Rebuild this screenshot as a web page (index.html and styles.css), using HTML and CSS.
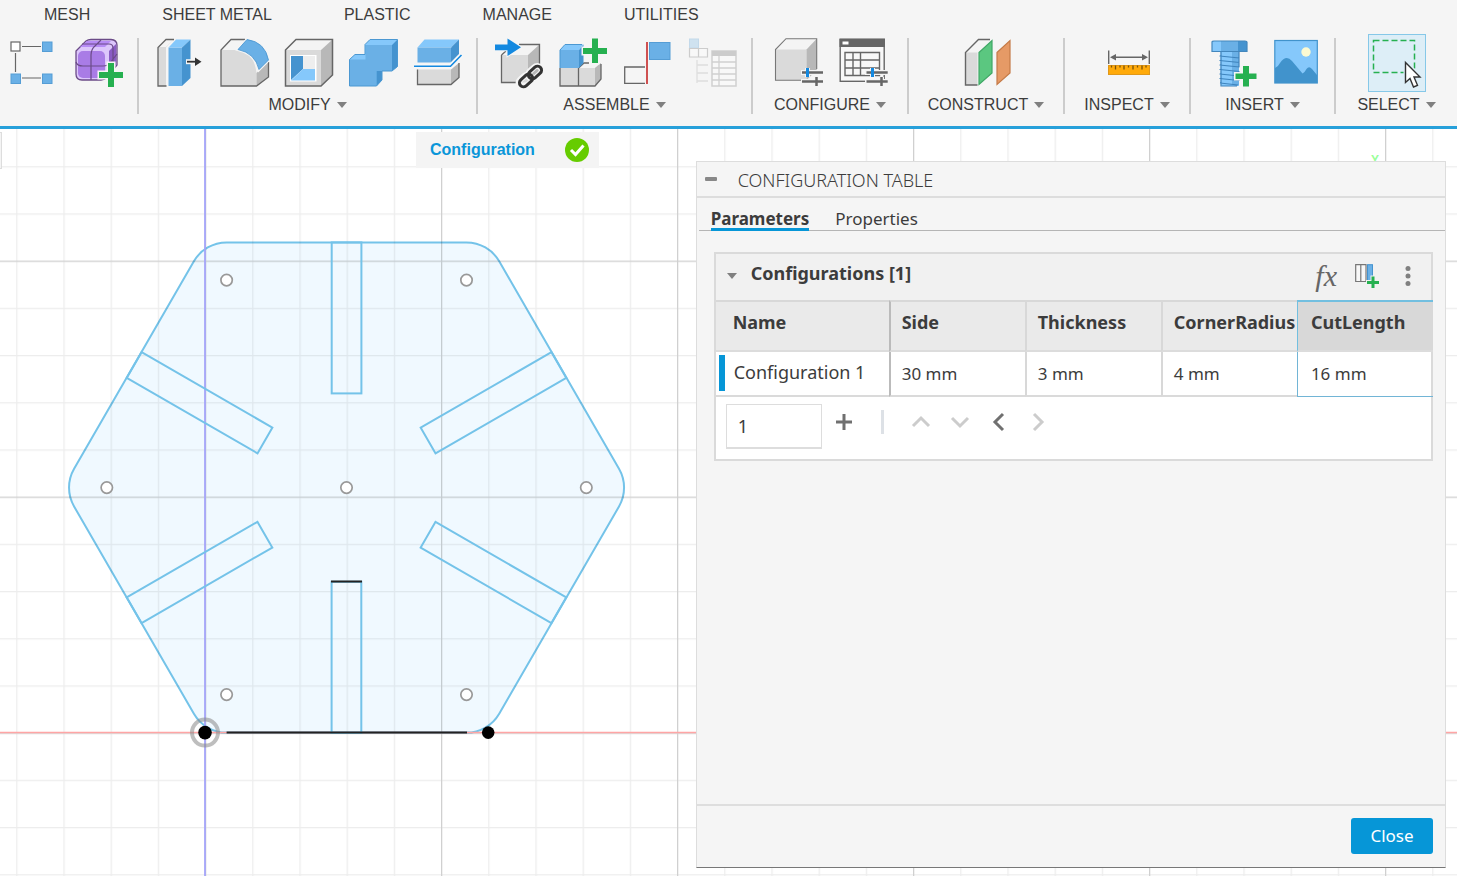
FILE: index.html
```html
<!DOCTYPE html>
<html lang="en">
<head>
    <meta charset="UTF-8">
    <meta name="viewport" content="width=device-width, initial-scale=1.0">
    <title>Configuration Table</title>
    <link rel="stylesheet" href="styles.css">
</head>
<body>

<header class="toolbar">
    <nav class="tabs">
        <a href="#">MESH</a>
        <a href="#">SHEET METAL</a>
        <a href="#">PLASTIC</a>
        <a href="#">MANAGE</a>
        <a href="#">UTILITIES</a>
    </nav>

    <div class="groups">
        <div class="group first">
            <div class="icons">
                <button class="tool" aria-label="Edit form">
                    <svg viewBox="0 0 48 48">
                        <path d="M14 7.500H33M14 39H33M7.500 14V33" stroke="#666" stroke-width="1.200"/>
                        <rect x="3" y="3" width="9" height="9" fill="#fff" stroke="#666" stroke-width="1.200"/>
                        <g fill="#6ab0e6" stroke="#559dd5"><rect x="34.500" y="3" width="9.500" height="9.500"/><rect x="3" y="35" width="9.500" height="9.500"/><rect x="34.500" y="35" width="9.500" height="9.500"/></g>
                    </svg>
                </button>
                <button class="tool" aria-label="Create form">
                    <svg viewBox="0 0 48 48">
                        <path d="M3 12L13 2Q15 .5 18 .5H38Q44 1 44 6V26L34 38Q32 41 28 41H9Q3 41 3 35Z" fill="#dcc6fb" stroke="#6b4b87" stroke-width="1.300"/>
                        <path d="M7 8L14 2H38L32 8Z" fill="#b78bf5"/>
                        <path d="M36 12L43 5V26L36 34Z" fill="#8a5cc4"/>
                        <rect x="5" y="12" width="27" height="27" rx="5" fill="#a97ce6"/>
                        <path d="M3 23Q4 27 10 27H30Q35 27 37 24L44 15M18 41V16Q18 10 23 6L28 1M9 5H36Q40 5 40 9V30" fill="none" stroke="#6b4b87" stroke-width="1.200"/>
                        <path d="M35 24H41V33H50V39H41V48H35V39H26V33H35Z" fill="#26b050" stroke="#f5f5f5" stroke-width="3" paint-order="stroke"/>
                    </svg>
                </button>
            </div>
        </div>

        <div class="group">
            <div class="icons">
                <button class="tool" aria-label="Press pull">
                    <svg viewBox="0 0 48 48">
                        <path d="M4 8.500L12 .5H19L12 8.500V47H4Z" fill="#dadada"/>
                        <path d="M5 8L12 1H19L12 8Z" fill="#f4f4f4"/>
                        <path d="M12.500 47H4V8.500L12 .5H20" fill="none" stroke="#666" stroke-width="1.300"/>
                        <path d="M14.500 8.500H28V47H14.500Z" fill="#6ab0e6"/>
                        <path d="M14.500 8.500L22 .5H36.500L28 8.500Z" fill="#85c8fb"/>
                        <path d="M28 8.500L36.500 .5V39L28 47Z" fill="#4593cf"/>
                        <path d="M32 22.700H42" stroke="#f5f5f5" stroke-width="5"/>
                        <path d="M33 22.700H43" stroke="#333" stroke-width="1.800"/>
                        <path d="M41 18.500L47.500 22.700L41 27Z" fill="#333"/>
                    </svg>
                </button>
                <button class="tool" aria-label="Fillet">
                    <svg viewBox="0 0 48 48">
                        <path d="M2 11L12 .5H28L49 22V38L37.500 47H2Z" fill="#f4f4f4"/>
                        <path d="M2 11H19Q35 13 37.500 34V47H2Z" fill="#dadada"/>
                        <path d="M37.500 34L49.500 23V38L37.500 47Z" fill="#b8b8b8"/>
                        <path d="M26 .5H12L2 11V47H37.500L49.500 38V23" fill="none" stroke="#666" stroke-width="1.300"/>
                        <path d="M19 10.500L28 .5Q46 3 49.500 21L40 30.500Q36 14 19 10.500Z" fill="#6ab0e6" stroke="#f5f5f5" stroke-width="3" paint-order="stroke"/>
                        <path d="M19 10.500L28 .5Q46 3 49.500 21L40 30.500Q36 14 19 10.500Z" fill="none" stroke="#4593cf" stroke-width=".8"/>
                    </svg>
                </button>
                <button class="tool" aria-label="Shell">
                    <svg viewBox="0 0 48 48">
                        <path d="M1.500 11L12 .5H48.500L37 11Z" fill="#f4f4f4"/>
                        <path d="M1.500 11H37V47H1.500Z" fill="#dadada"/>
                        <path d="M37 11L48.500 .5V36L37 47Z" fill="#b8b8b8"/>
                        <path d="M1.500 11L12 .5H48.500V36L37 47H1.500Z" fill="none" stroke="#666" stroke-width="1.500"/>
                        <rect x="6" y="16" width="26.500" height="26.500" fill="#fff"/>
                        <path d="M7 17H19V30L7 41Z" fill="#4593cf"/>
                        <path d="M7 41.500L19 30H31V41.500Z" fill="#85c8fb"/>
                        <path d="M19 17H31V30H19Z" fill="#eee"/>
                    </svg>
                </button>
                <button class="tool" aria-label="Combine">
                    <svg viewBox="0 0 48 48">
                        <path d="M.5 20.500L6 15.500H16V5.500L21 .5H48.500V27.500L43 32H33V41L27.500 47H.5Z" fill="#85c8fb"/>
                        <path d="M.5 20.500H16.500V6H43V32H27.500V47H.5Z" fill="#6ab0e6"/>
                        <path d="M43 6L48.500 .5V27.500L43 32ZM27.500 32H33V41L27.500 47Z" fill="#4593cf"/>
                        <path d="M.5 20.500L6 15.500H16V5.500L21 .5H48.500V27.500L43 32H33V41L27.500 47H.5Z" fill="none" stroke="#4b98d2"/>
                    </svg>
                </button>
                <button class="tool" aria-label="Split body">
                    <svg viewBox="0 0 48 48">
                        <path d="M3.500 8.500L10.500 .5H45L37 8.500Z" fill="#85c8fb"/>
                        <path d="M3.500 8.500H37V23.500H3.500Z" fill="#6ab0e6"/>
                        <path d="M37 8.500L45 .5V15.500L37 23.500Z" fill="#4593cf"/>
                        <path d="M37 30.500L45 24V38.500L37 45.500Z" fill="#b8b8b8"/>
                        <path d="M3.500 30.500H37V45.500H3.500Z" fill="#dadada"/>
                        <path d="M3.500 30.500V45.500H37L45 38.500V24" fill="none" stroke="#666" stroke-width="1.300"/>
                        <path d="M0 27.200H36.500L47.500 16" fill="none" stroke="#f8f8f8" stroke-width="5"/>
                        <path d="M0 27.200H36.500L47.500 16" fill="none" stroke="#1489e0" stroke-width="1.600"/>
                    </svg>
                </button>
            </div>
            <button class="menu">MODIFY<span class="caret"></span></button>
        </div>

        <div class="group">
            <div class="icons">
                <button class="tool" aria-label="Insert component">
                    <svg viewBox="0 0 48 48">
                        <path d="M8.500 16L19 5.500H46.500L35 16Z" fill="#f4f4f4"/>
                        <path d="M8.500 16H35V43.500H8.500Z" fill="#dadada"/>
                        <path d="M35 16L46.500 5.500V32L35 43.500Z" fill="#b8b8b8"/>
                        <path d="M8.500 16V43.500H27M26 5.500H46.500V26M8.500 16L13 12" fill="none" stroke="#666" stroke-width="1.300"/>
                        <path d="M2 5.500H14.500V-.5L28 8.300L14.500 17V11.300H2Z" fill="#1489e0" stroke="#f5f5f5" stroke-width="2" paint-order="stroke"/>
                        <g fill="none" transform="rotate(-42 37.500 37.500)">
                            <g stroke="#f5f5f5" stroke-width="6"><rect x="23" y="33" width="15" height="9" rx="4.500"/><rect x="36" y="33" width="15" height="9" rx="4.500"/></g>
                            <g stroke="#333" stroke-width="3"><rect x="24" y="33.500" width="15" height="8" rx="4"/><rect x="36" y="33.500" width="15" height="8" rx="4"/></g>
                        </g>
                    </svg>
                </button>
                <button class="tool" aria-label="New component">
                    <svg viewBox="0 0 48 48">
                        <path d="M20.500 29L26 24H43V40L37 47H2V29Z" fill="#dadada"/>
                        <path d="M21 29L26 24H43L37 29Z" fill="#f4f4f4"/>
                        <path d="M37 29L43 24V40L37 47Z" fill="#b8b8b8"/>
                        <path d="M2 29V47H37L43 40V25M20.500 47V29L26 24H31" fill="none" stroke="#666" stroke-width="1.300"/>
                        <path d="M2 11L7 5.500H25.500L21 11Z" fill="#85c8fb"/>
                        <path d="M2 11H21V29H2Z" fill="#6ab0e6"/>
                        <path d="M21 11L25.500 5.500V24L21 29Z" fill="#4593cf"/>
                        <path d="M2 29V11L7 5.500H24" fill="none" stroke="#4b98d2"/>
                        <path d="M34 -.5H40V9H49V15H40V24H34V15H25V9H34Z" fill="#26b050" stroke="#f5f5f5" stroke-width="3" paint-order="stroke"/>
                    </svg>
                </button>
                <button class="tool" aria-label="Joint">
                    <svg viewBox="0 0 48 48">
                        <path d="M22 28H1.700V44.300H22" fill="#f5f5f5" stroke="#666" stroke-width="1.300"/>
                        <path d="M24 3V45" stroke="#c62828" stroke-width="1.600"/>
                        <rect x="26.500" y="3.500" width="20.500" height="17" fill="#6ab0e6" stroke="#559dd5"/>
                    </svg>
                </button>
                <button class="tool" aria-label="Bill of materials" disabled>
                    <svg viewBox="0 0 48 48">
                        <rect x="1.500" y="0" width="9" height="9" fill="#cfe2f0" stroke="#c3d9ea"/>
                        <path d="M1.500 9.500H19.500V18H1.500ZM10.500 9.500V18" fill="#f8f8f8" stroke="#ccc" stroke-width="1.200"/>
                        <path d="M9 21V44M9 26H20M9 34H20M9 42H20" stroke="#ddd" stroke-width="1.300"/>
                        <rect x="24" y="12" width="24" height="35" fill="#f8f8f8" stroke="#d0d0d0" stroke-width="1.500"/>
                        <path d="M24 12H48V17H24Z" fill="#ccc"/>
                        <path d="M24 23H48M24 29H48M24 35H48M24 41H48M31 17V47" stroke="#d0d0d0" stroke-width="1.300"/>
                    </svg>
                </button>
            </div>
            <button class="menu">ASSEMBLE<span class="caret"></span></button>
        </div>

        <div class="group">
            <div class="icons">
                <button class="tool" aria-label="Create configuration">
                    <svg viewBox="0 0 48 48">
                        <path d="M1.500 10.500L12 -.3H42.700L32.500 10.500Z" fill="#f4f4f4"/>
                        <path d="M1.500 10.500H32.500V41.300H1.500Z" fill="#dadada"/>
                        <path d="M32.500 10.500L42.700 -.3V31L32.500 41.300Z" fill="#b8b8b8"/>
                        <path d="M28 41.300H1.500V10.500L12 -.3H42.700V30" fill="none" stroke="#777" stroke-width="1.100"/>
                        <path d="M27 33.500H49M27 42.500H49M33.500 29V38M42.500 38V47" stroke="#f5f5f5" stroke-width="5"/>
                        <path d="M28 33.500H49M28 42.500H49M42.500 38V47" stroke="#666" stroke-width="2.500"/>
                        <path d="M33.500 29V38" stroke="#1489e0" stroke-width="3"/>
                    </svg>
                </button>
                <button class="tool" aria-label="Configuration table">
                    <svg viewBox="0 0 48 48">
                        <rect x="1.200" y=".3" width="44" height="42" fill="#f8f8f8" stroke="#666" stroke-width="1.400"/>
                        <path d="M.5 -.3H46V8H.5Z" fill="#666"/>
                        <path d="M3.500 2.500H9.500V5.500H3.500Z" fill="#fff"/>
                        <path d="M6 13.500H40.500V36.500H6ZM6 21H40.500M6 29H40.500M14 13.500V36.500M21.500 13.500V36.500" fill="none" stroke="#666" stroke-width="1.400"/>
                        <path d="M26 33.500H48.700M26 42.500H48.700M33.500 29V38M42.500 38V47" stroke="#f5f5f5" stroke-width="5"/>
                        <path d="M27.500 33.500H48.700M27.500 42.500H48.700M42.500 38V47" stroke="#666" stroke-width="2.500"/>
                        <path d="M33.500 29V38" stroke="#1489e0" stroke-width="3"/>
                    </svg>
                </button>
            </div>
            <button class="menu">CONFIGURE<span class="caret"></span></button>
        </div>

        <div class="group">
            <div class="icons">
                <button class="tool" aria-label="Offset plane">
                    <svg viewBox="0 0 48 48">
                        <path d="M3.500 13.500L16.500 .5H29L15.500 13.500Z" fill="#f4f4f4"/>
                        <path d="M3.500 13.500H15.500V46H3.500Z" fill="#dadada"/>
                        <path d="M15.500 46H3.500V13.500L16.500 .5H28" fill="none" stroke="#666" stroke-width="1.400"/>
                        <path d="M17 13.500L30 1.500V34L17 45.500Z" fill="#5bc780" stroke="#3fa765" stroke-width="1.200"/>
                        <path d="M35 13.500L48 1.500V34L35 45.500Z" fill="#e69a66" stroke="#c57b48" stroke-width="1.200"/>
                    </svg>
                </button>
            </div>
            <button class="menu">CONSTRUCT<span class="caret"></span></button>
        </div>

        <div class="group">
            <div class="icons">
                <button class="tool" aria-label="Measure">
                    <svg viewBox="0 0 48 48">
                        <path d="M5.700 11.500V25M46.300 11.500V25M9 18.300H43" stroke="#666" stroke-width="1.400"/>
                        <path d="M7 18.300L13 15V21.600ZM45 18.300L39 15V21.600Z" fill="#666"/>
                        <rect x="5.500" y="26.500" width="41" height="9" fill="#ffaa0a" stroke="#e0981a"/>
                        <path d="M8.500 26.500V28.500M12.500 26.500V30.500M17 26.500V28.500M21 26.500V30.500M25.500 26.500V28.500M30 26.500V30.500M34.500 26.500V28.500M39 26.500V30.500M43 26.500V28.500" stroke="#7a5208" stroke-width="1.300"/>
                    </svg>
                </button>
            </div>
            <button class="menu">INSPECT<span class="caret"></span></button>
        </div>

        <div class="group">
            <div class="icons">
                <button class="tool" aria-label="Insert fastener">
                    <svg viewBox="0 0 48 48">
                        <path d="M14.500 12H33V47H16L14.500 45Z" fill="#85c8fb"/>
                        <path d="M26 12H33V46H26Z" fill="#6ab0e6"/>
                        <path d="M13.500 17L33.500 19M13.500 21.500L33.500 23.500M13.500 26L33.500 28M13.500 30.500L33.500 32.500M13.500 35L33.500 37M13.500 39.500L33.500 41.500M14 44L32 46M15 13V47H31M33 13V28" stroke="#3f84bd" stroke-width="1.200" fill="none"/>
                        <path d="M6 3Q6 2 8 2H39Q41 2 41 3V12.500H6Z" fill="#6ab0e6"/>
                        <path d="M6 3L8 2H15V12.500H6Z" fill="#85c8fb"/>
                        <path d="M32 2H39L41 3V12.500H32Z" fill="#4593cf"/>
                        <path d="M6 3Q6 2 8 2H39Q41 2 41 3V12.500H6Z" fill="none" stroke="#4387bd" stroke-width="1.200"/>
                        <path d="M37 27H43V34.500H50.500V40H43V47.500H37V40H29.500V34.500H37Z" fill="#26b050" stroke="#f5f5f5" stroke-width="3" paint-order="stroke"/>
                    </svg>
                </button>
                <button class="tool" aria-label="Insert image">
                    <svg viewBox="0 0 48 48">
                        <rect x="3.800" y="1.500" width="42.500" height="42.500" fill="#85c8fb"/>
                        <path d="M4 29Q7 28 9 24Q15 15 21 22L31.500 34.500Q34 33 35.500 30Q38 26.500 41 30L46 36V44H4Z" fill="#4193cc"/>
                        <circle cx="35" cy="13" r="4.700" fill="#fcfad2"/>
                        <rect x="3.800" y="1.500" width="42.500" height="42.500" fill="none" stroke="#4193cc" stroke-width="1.200"/>
                    </svg>
                </button>
            </div>
            <button class="menu">INSERT<span class="caret"></span></button>
        </div>

        <div class="group">
            <div class="icons">
                <button class="tool selected" aria-label="Select">
                    <svg viewBox="0 0 56 56">
                        <rect x="4.500" y="5.500" width="41" height="32" fill="none" stroke="#26b050" stroke-width="1.500" stroke-dasharray="6 3"/>
                        <path d="M36.500 27.500V47.500L41 43.500L44.500 52L48.500 50.300L45 42H51Z" fill="#fff" stroke="#ddeef7" stroke-width="4" paint-order="stroke"/>
                        <path d="M36.500 27.500V47.500L41 43.500L44.500 52L48.500 50.300L45 42H51Z" fill="#fff" stroke="#333" stroke-width="1.400"/>
                    </svg>
                </button>
            </div>
            <button class="menu">SELECT<span class="caret"></span></button>
        </div>
    </div>
</header>

<main class="canvas">
    <!-- sketch, drawn from the origin point -->
    <svg class="sketch" aria-label="Hexagon sketch">
        <defs>
            <pattern id="minor" width="47.200" height="47.200" patternUnits="userSpaceOnUse">
                <path d="M0 .5H47.200M.5 0V47.200" stroke="#000" stroke-opacity=".07" stroke-width="1.500"/>
            </pattern>
            <pattern id="major" width="236" height="236" patternUnits="userSpaceOnUse">
                <path d="M0 .5H236M.5 0V236" stroke="#000" stroke-opacity=".12" stroke-width="1.500"/>
            </pattern>
            <rect id="slot" x="126.700" y="-490.200" width="29.700" height="151"/>
        </defs>
        <g transform="translate(205 603.600)">
            <path d="M21.600 -490.200H261.500A37.800 37.800 0 0 1 294.200 -471.300L414 -263.900A37.800 37.800 0 0 1 414 -226.100L294.200 -18.900A37.800 37.800 0 0 1 261.500 0H21.600A37.800 37.800 0 0 1 -11.100 -18.900L-130.900 -226.100A37.800 37.800 0 0 1 -130.900 -263.900L-11.100 -471.300A37.800 37.800 0 0 1 21.600 -490.200Z" fill="#f0f9ff" stroke="#74c3e9" stroke-width="2"/>
            <rect x="-2360" y="-2360" width="7080" height="4720" fill="url(#minor)"/>
            <rect x="-2360" y="-2360" width="7080" height="4720" fill="url(#major)"/>
            <path d="M-2000 0H5000" stroke="#ffa5a5" stroke-width="1.500"/>
            <path d="M0 -2000V2000" stroke="#a5a5fa" stroke-width="1.800"/>
            <g fill="none" stroke="#74c3e9" stroke-width="2">
                <use href="#slot"/>
                <use href="#slot" transform="rotate(60 141.500 -245)"/>
                <use href="#slot" transform="rotate(120 141.500 -245)"/>
                <use href="#slot" transform="rotate(180 141.500 -245)"/>
                <use href="#slot" transform="rotate(240 141.500 -245)"/>
                <use href="#slot" transform="rotate(300 141.500 -245)"/>
            </g>
            <path d="M21.600 0H262M126 -151H157" stroke="#222" stroke-width="2"/>
            <g fill="#fff" stroke="#999" stroke-width="1.700">
                <circle cx="21.600" cy="-452.500" r="5.700"/>
                <circle cx="261.500" cy="-452.500" r="5.700"/>
                <circle cx="-98.200" cy="-245" r="5.700"/>
                <circle cx="141.500" cy="-245" r="5.700"/>
                <circle cx="381.300" cy="-245" r="5.700"/>
                <circle cx="21.600" cy="-38" r="5.700"/>
                <circle cx="261.500" cy="-38" r="5.700"/>
            </g>
            <circle r="13" fill="none" stroke="#888" stroke-opacity=".55" stroke-width="4"/>
            <circle r="6.800"/>
            <circle cx="283.200" r="6.300"/>
        </g>
    </svg>

    <div class="browser-edge"></div>

    <div class="badge">
        <span>Configuration</span>
        <svg viewBox="0 0 24 24"><circle cx="12" cy="12" r="12" fill="#66cc00"/><path d="M6 12L10.500 16.500L18.500 7.500" fill="none" stroke="#fff" stroke-width="3"/></svg>
    </div>

    <div class="viewcube">Y</div>

    <section class="panel">
        <div class="panel-title">
            <button class="collapse" aria-label="Collapse"></button>
            <h1>CONFIGURATION TABLE</h1>
        </div>
        <div class="panel-body">
            <nav class="panel-tabs">
                <a class="active" href="#">Parameters</a>
                <a href="#">Properties</a>
            </nav>

            <div class="config">
                <div class="config-head">
                    <span class="caret"></span>
                    <h2>Configurations [1]</h2>
                    <button class="fx" aria-label="Change parameters">fx</button>
                    <button class="add-column" aria-label="Add column">
                        <svg viewBox="0 0 24 24">
                            <path d="M.7 .7H11V17.500H.7ZM5.800 .7V17.500" fill="#f8f8f8" stroke="#777" stroke-width="1.200"/>
                            <rect x="12.500" y=".7" width="5" height="17" fill="#6ab0e6" stroke="#4593cf"/>
                            <path d="M16.500 12.500H19.500V17H24V20H19.500V24H16.500V20H12V17H16.500Z" fill="#26b050" stroke="#f1f1f1" stroke-width="2" paint-order="stroke"/>
                        </svg>
                    </button>
                    <button class="more" aria-label="More">
                        <svg viewBox="0 0 6 22"><g fill="#808080"><circle cx="3" cy="3.500" r="2.500"/><circle cx="3" cy="11" r="2.500"/><circle cx="3" cy="18.500" r="2.500"/></g></svg>
                    </button>
                </div>

                <table>
                    <thead>
                        <tr>
                            <th class="name">Name</th>
                            <th>Side</th>
                            <th>Thickness</th>
                            <th>CornerRadius</th>
                            <th class="current">CutLength</th>
                        </tr>
                    </thead>
                    <tbody>
                        <tr>
                            <td class="name"><span>Configuration 1</span></td>
                            <td>30 mm</td>
                            <td>3 mm</td>
                            <td>4 mm</td>
                            <td class="current">16 mm</td>
                        </tr>
                    </tbody>
                </table>

                <div class="pager">
                    <input type="text" value="1" aria-label="Rows to add">
                    <button aria-label="Add row"><svg viewBox="0 0 18 18"><path d="M9 1V17M1 9H17"/></svg></button>
                    <span class="divider"></span>
                    <button aria-label="Move up" disabled><svg viewBox="0 0 18 18"><path d="M1 13L9 5L17 13"/></svg></button>
                    <button aria-label="Move down" disabled><svg viewBox="0 0 18 18"><path d="M1 5L9 13L17 5"/></svg></button>
                    <button aria-label="Move left"><svg viewBox="0 0 18 18"><path d="M13 1L5 9L13 17"/></svg></button>
                    <button aria-label="Move right" disabled><svg viewBox="0 0 18 18"><path d="M5 1L13 9L5 17"/></svg></button>
                </div>
            </div>
        </div>
        <div class="panel-foot">
            <button class="close">Close</button>
        </div>
    </section>
</main>

</body>
</html>
```
FILE: styles.css
```css
* {
    box-sizing: border-box;
}
body {
    display: flex;
    flex-direction: column;
    min-height: 100vh;
    margin: 0;
    font-family: "Liberation Sans", Arial, sans-serif;
    font-size: 16px;
    color: #3c3c3c;
    background-color: #fff;
}
a {
    color: inherit;
    text-decoration: none;
}
button {
    padding: 0;
    border: none;
    background: none;
    color: inherit;
    font: inherit;
    cursor: pointer;
}
svg {
    display: block;
    overflow: visible;
}

/* Toolbar */
.toolbar {
    background-color: #f5f5f5;
    border-bottom: 3px solid #27a0da;
}
.tabs {
    display: flex;
    gap: 72px;
    height: 38px;
    padding: 5px 44px 0;
    line-height: 20px;
    white-space: nowrap;
}
.groups {
    display: grid;
    grid-template-columns: 137fr 339fr 275fr 156fr 156fr 126fr 145fr 123fr;
    padding-bottom: 12px;
}
.group {
    display: flex;
    flex-direction: column;
    align-items: center;
    gap: 7px;
    height: 76px;
    border-left: 2px solid #ccc;
}
.group.first {
    align-items: flex-start;
    padding-left: 8px;
    border-left: none;
}
.icons {
    display: flex;
    flex: none;
    align-items: center;
    gap: 17px;
    height: 50px;
}
.tool {
    width: 48px;
    height: 48px;
}
.tool.selected {
    width: 58px;
    height: 58px;
    border: 1px solid #86c8e8;
    background-color: #ddeef7;
}
.menu {
    display: flex;
    align-items: center;
    gap: 6px;
    line-height: 20px;
}
.caret {
    border: 5px solid transparent;
    border-top: 6px solid #808080;
    border-bottom: none;
}

/* Canvas */
.canvas {
    position: relative;
    flex: 1;
    min-height: 640px;
    overflow: hidden;
}
.sketch {
    position: absolute;
    width: 100%;
    height: 100%;
}
.browser-edge {
    position: absolute;
    top: 3px;
    left: 0;
    width: 2px;
    height: 37px;
    border: 1px solid #ddd;
    border-left: none;
    background-color: #f4f4f4;
}
.badge {
    position: absolute;
    top: 3px;
    left: 416px;
    display: flex;
    align-items: center;
    gap: 30px;
    height: 36px;
    padding: 0 10px 0 14px;
    background-color: #f4f4f4;
    color: #0a96d9;
    font-weight: bold;
}
.badge svg {
    width: 24px;
    height: 24px;
}
.viewcube {
    position: absolute;
    top: 24px;
    right: 78px;
    color: #9f9;
    font-size: 12px;
    font-weight: bold;
}

/* Configuration table panel */
.panel {
    position: absolute;
    top: 32px;
    right: 11px;
    bottom: 8px;
    display: flex;
    flex-direction: column;
    width: 51.5%;
    min-width: 640px;
    background-color: #f5f5f5;
    border: 1px solid #ddd;
    border-bottom-color: #777;
    font-family: "Noto Sans", "Open Sans", sans-serif;
    font-size: 18px;
}
.panel-title {
    display: flex;
    align-items: center;
    gap: 21px;
    height: 36px;
    padding-left: 8px;
    border-bottom: 2px solid #ddd;
}
.panel-title h1 {
    margin: 2px 0 0;
    font-size: 18px;
    font-weight: 300;
}
.collapse {
    width: 12px;
    height: 4px;
    border-radius: 1px;
    background-color: #888;
}
.panel-body {
    flex: 1;
}
.panel-tabs {
    display: flex;
    gap: 26px;
    height: 33px;
    margin-left: 2px;
    padding-left: 12px;
    border-bottom: 1px solid #b5b5b5;
    font-size: 17px;
    line-height: 41px;
}
.panel-tabs a {
    height: 33px;
}
.panel-tabs .active {
    border-bottom: 3px solid #0696d7;
    font-weight: 700;
}
.config {
    margin: 21px 12px 0 17px;
    border: 2px solid #dadada;
    background-color: #fff;
}
.config-head {
    display: flex;
    align-items: center;
    height: 46px;
    padding: 0 20px 2px 11px;
    background-color: #f1f1f1;
}
.config-head h2 {
    flex: 1;
    margin: 0 0 6px 14px;
    font-size: 18px;
    font-weight: 700;
}
.fx {
    margin-right: 18px;
    color: #666;
    font: italic 30px "Liberation Serif", serif;
}
.add-column {
    width: 24px;
    height: 24px;
    margin-right: 26px;
}
.more {
    width: 6px;
    height: 22px;
}
table {
    width: calc(100% + 2px);
    table-layout: fixed;
    border-collapse: separate;
    border-spacing: 0;
}
th, td {
    overflow: hidden;
    padding: 0 0 0 11px;
    border-left: 2px solid #d8d8d8;
    text-align: left;
    white-space: nowrap;
}
th {
    height: 52px;
    padding-bottom: 8px;
    border-top: 2px solid #d8d8d8;
    border-bottom: 2px solid #dcdcdc;
    background-color: #eaeaea;
    font-weight: 700;
}
td {
    height: 45px;
    border-bottom: 2px solid #dadada;
    font-size: 17px;
}
th.name {
    width: 173px;
    padding-left: 17px;
    border-left: none;
}
td.name {
    padding-left: 3px;
    padding-bottom: 2px;
    border-left: none;
    font-size: 18px;
}
td.name span {
    display: block;
    height: 36px;
    padding-left: 9px;
    border-left: 6px solid #0696d7;
    line-height: 35px;
}
.name + th, .name + td {
    border-left-color: #bbb;
}
th.current {
    padding-left: 13px;
    border-top-color: #72bfe0;
    border-left: 1px solid #72bfe0;
    background-color: #d8d8d8;
}
td.current {
    padding-left: 13px;
    padding-bottom: 1px;
    border-bottom: 1px solid #72b5d6;
    border-left: 1px solid #72b5d6;
}
.pager {
    display: flex;
    gap: 21px;
    height: 62px;
    padding: 7px 10px;
}
.pager input {
    width: 96px;
    height: 45px;
    margin-right: -8px;
    padding: 0 11px;
    border: 1px solid #ddd;
    border-bottom-width: 2px;
    color: #3c3c3c;
    font: 18px "Noto Sans", sans-serif;
}
.pager button {
    width: 18px;
    height: 36px;
}
.pager path {
    fill: none;
    stroke: #707070;
    stroke-width: 3;
}
.pager :disabled path {
    stroke: #ccc;
}
.pager .divider {
    width: 3px;
    height: 24px;
    margin: 6px 7px;
    background-color: #dde1e6;
}
.panel-foot {
    display: flex;
    justify-content: flex-end;
    padding: 12px 12px 13px;
    border-top: 2px solid #dedede;
}
.close {
    width: 82px;
    height: 36px;
    padding-bottom: 2px;
    border-radius: 3px;
    background-color: #0696d7;
    color: #fff;
    font-size: 17px;
}
```
